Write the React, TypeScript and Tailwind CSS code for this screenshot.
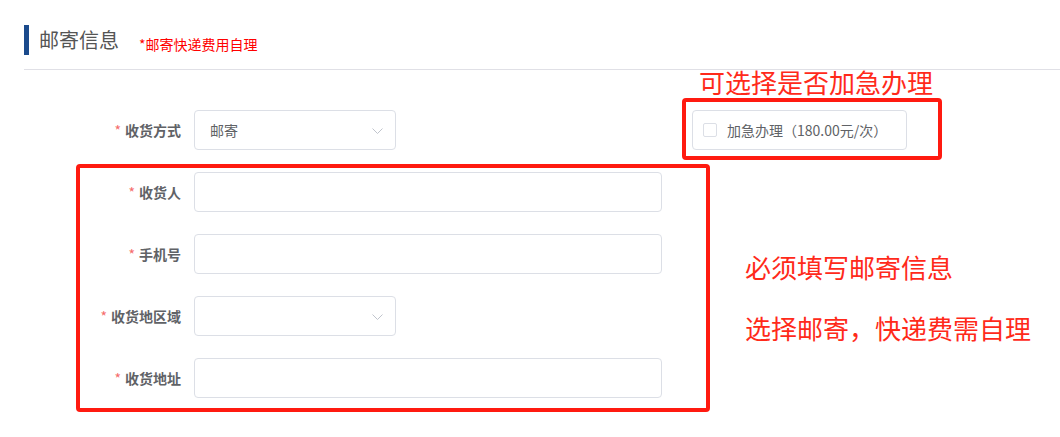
const font = { fontFamily: '"Noto Sans CJK SC", "Noto Sans", sans-serif' };

function Label({ text }: { text: string }) {
  return (
    <div className="w-[194px] shrink-0 pr-[13px] text-right text-[14px] font-bold text-[#606266]">
      <span className="mr-[4px] font-normal text-[#f56c6c]">*</span>
      {text}
    </div>
  );
}

function Select({ value }: { value?: string }) {
  return (
    <div className="flex h-[40px] w-[202px] items-center justify-between rounded-[4px] border border-[#dcdfe6] pl-[15px] pr-[12px] text-[14px] text-[#606266]">
      <span>{value}</span>
      <svg width="11" height="6" viewBox="0 0 11 6" className="mt-[1px]">
        <path d="M0.5 0.5 L5.5 5.5 L10.5 0.5" fill="none" stroke="#c0c4cc" strokeWidth="1" />
      </svg>
    </div>
  );
}

function Input() {
  return <div className="h-[40px] w-[468px] rounded-[4px] border border-[#dcdfe6]" />;
}

export default function App() {
  return (
    <div className="relative h-[437px] w-[1060px] overflow-hidden bg-white" style={font}>
      <div className="flex items-center pl-[24px] pt-[25px]">
        <div className="h-[30px] w-[5px] bg-[#1b4a8c]" />
        <span className="ml-[10px] text-[20px] leading-[30px] text-[#555]">邮寄信息</span>
        <span className="ml-[20px] mt-[8px] text-[14px] text-[#ff0000]">*邮寄快递费用自理</span>
      </div>
      <div className="ml-[24px] mt-[14px] h-px bg-[#e0e0e6]" />

      <div className="mt-[40px] flex flex-col gap-[22px]">
        <div className="flex items-center">
          <Label text="收货方式" />
          <Select value="邮寄" />
          <div className="ml-[296px] flex h-[40px] w-[215px] items-center rounded-[4px] border border-[#dcdfe6] pl-[10px] text-[14px] text-[#606266]">
            <span className="h-[14px] w-[14px] rounded-[2px] border border-[#dcdfe6] bg-white" />
            <span className="ml-[10px]">加急办理（180.00元/次）</span>
          </div>
        </div>
        <div className="flex items-center">
          <Label text="收货人" />
          <Input />
        </div>
        <div className="flex items-center">
          <Label text="手机号" />
          <Input />
        </div>
        <div className="flex items-center">
          <Label text="收货地区域" />
          <Select />
        </div>
        <div className="flex items-center">
          <Label text="收货地址" />
          <Input />
        </div>
      </div>

      {/* annotations drawn over the form */}
      <div className="absolute left-[682px] top-[98px] h-[62px] w-[260px] rounded-[4px] border-[4px] border-[#ff1a10]" />
      <div className="absolute left-[76px] top-[164px] h-[248px] w-[634px] rounded-[4px] border-[4px] border-[#ff1a10]" />
      <div className="absolute left-[699px] top-[69px] text-[26px] leading-[26px] text-[#ff2a1a]">可选择是否加急办理</div>
      <div className="absolute left-[745px] top-[254px] text-[26px] leading-[26px] text-[#ff2a1a]">必须填写邮寄信息</div>
      <div className="absolute left-[745px] top-[315px] text-[26px] leading-[26px] text-[#ff2a1a]">选择邮寄，快递费需自理</div>
    </div>
  );
}
